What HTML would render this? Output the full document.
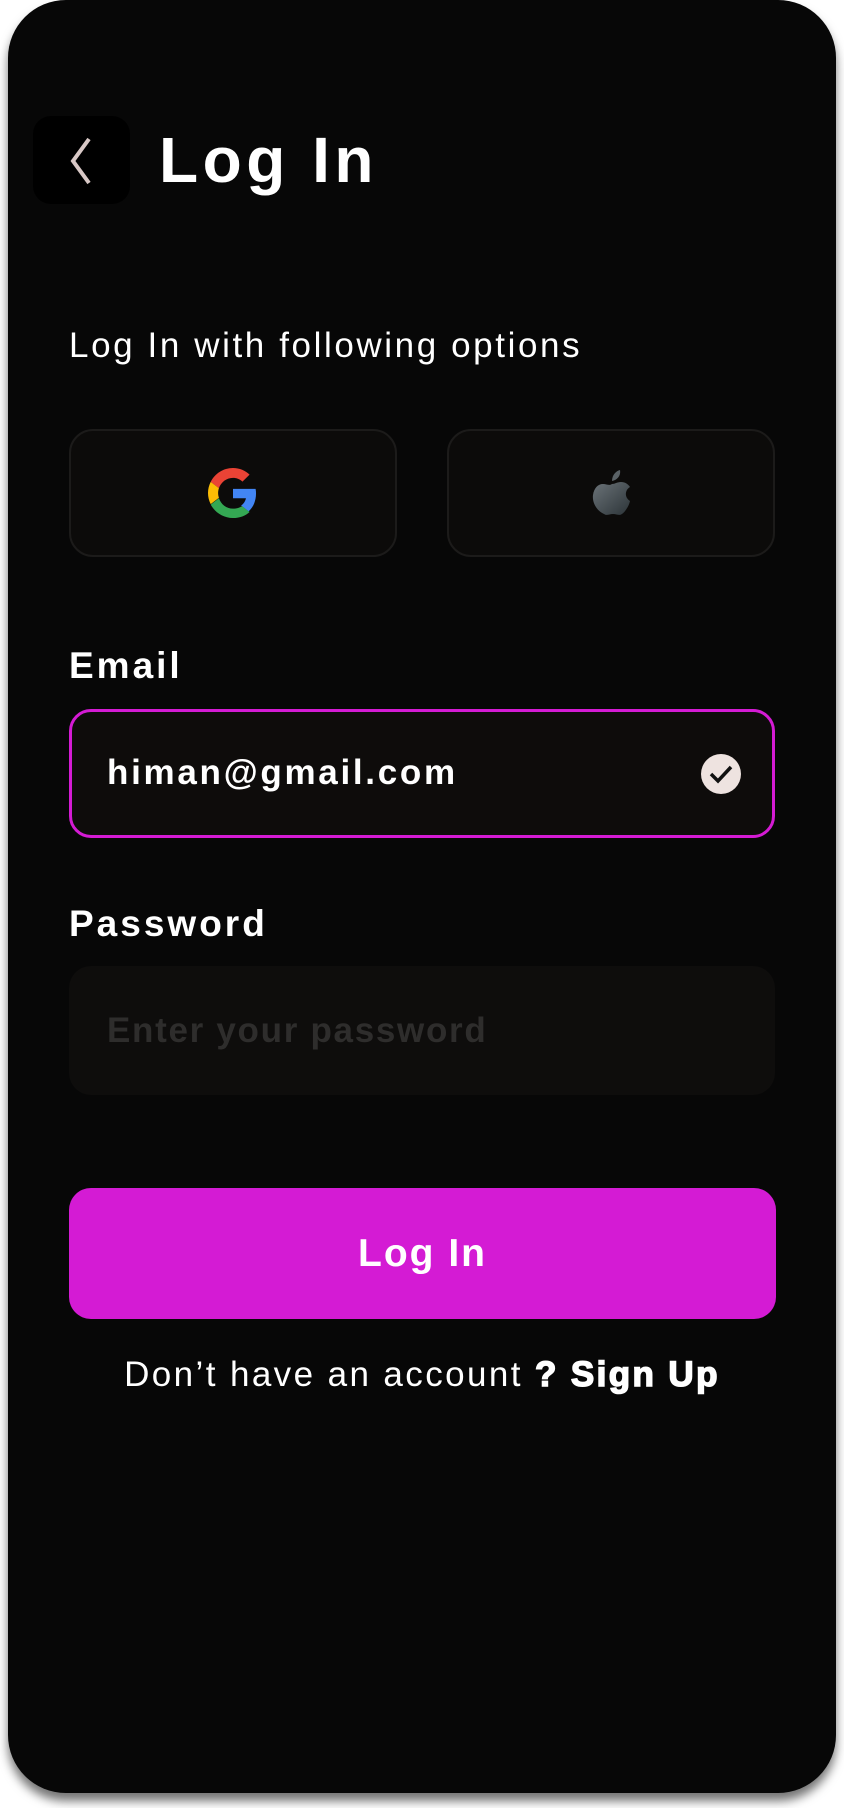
<!DOCTYPE html>
<html><head><meta charset="utf-8"><style>
*{margin:0;padding:0;box-sizing:border-box}
html,body{width:844px;height:1808px;background:#fff;overflow:hidden;font-family:"Liberation Sans",sans-serif}
.card{position:absolute;left:8px;top:0;width:828px;height:1793px;background:#070707;border-radius:58px;box-shadow:0 8px 10px rgba(0,0,0,.55)}
.abs{position:absolute}
.back{left:33px;top:116px;width:97px;height:88px;background:#000;border-radius:18px}
.title{left:159px;top:120px;font-size:64px;font-weight:bold;color:#fff;line-height:80px;letter-spacing:4.5px}
.sub{left:69px;top:325px;font-size:35px;color:#fff;line-height:42px;letter-spacing:2.6px}
.soc{top:429px;width:328px;height:128px;background:#0c0b0a;border:2px solid #1c1b1a;border-radius:24px}
.lbl{left:69px;font-size:37px;font-weight:bold;color:#fff;line-height:44px;letter-spacing:3px}
.inp{left:69px;width:706px;height:129px;border-radius:22px}
.btn{left:69px;top:1188px;width:707px;height:131px;background:#d41bd4;border-radius:22px;color:#fff;font-size:39px;font-weight:bold;text-align:center;line-height:131px;letter-spacing:2px}
</style></head><body>
<div class="card"></div>
<div class="abs back"><svg width="97" height="88" viewBox="0 0 97 88"><path d="M56 23 L40 45 L56 67" fill="none" stroke="#d8c8c6" stroke-width="4"/></svg></div>
<div class="abs title">Log In</div>
<div class="abs sub">Log In with following options</div>
<div class="abs soc" style="left:69px"><svg class="abs" style="left:137px;top:37px" width="50" height="50" viewBox="0 0 48 48"><path fill="#EA4335" d="M24 9.5c3.5 0 6.6 1.2 9.1 3.6l6.8-6.8C35.8 2.4 30.3 0 24 0 14.6 0 6.6 5.4 2.6 13.3l7.9 6.1C12.4 13.7 17.7 9.5 24 9.5z"/><path fill="#4285F4" d="M46.1 24.5c0-1.6-.1-3.1-.4-4.5H24v9h12.4c-.5 2.900-2.2 5.3-4.6 7l7.2 5.6c4.3-3.9 7.1-9.8 7.1-17.1z"/><path fill="#FBBC05" d="M10.5 28.6c-.5-1.4-.8-3-.8-4.6s.3-3.2.8-4.6l-7.9-6.1C.9 16.6 0 20.2 0 24s.9 7.4 2.6 10.7l7.9-6.1z"/><path fill="#34A853" d="M24 48c6.5 0 11.9-2.1 15.9-5.8l-7.2-5.6c-2.2 1.5-5 2.4-8.7 2.4-6.3 0-11.6-4.2-13.5-10l-7.9 6.1C6.6 42.6 14.6 48 24 48z"/></svg></div>
<div class="abs soc" style="left:447px"><svg class="abs" style="left:142px;top:36px" width="44" height="54" viewBox="0 0 44 54"><defs><linearGradient id="g" x1="0" y1="0" x2="1" y2="1"><stop offset="0" stop-color="#6b7378"/><stop offset="1" stop-color="#2c3438"/></linearGradient></defs><path fill="url(#g)" d="M21 17c3 0 5-2 9-2 4 0 7 2 9 5-5 3-6 10 0 14-1 5-5 11-8 13-3 2-5 0-9 0s-6 2-9 0C6 44 1 36 2 28c1-7 5-11 10-11 4 0 6 2 9 0z"/><path fill="#5a6266" d="M21 14c0-6 4-10 8-11 1 6-3 10-8 11z"/></svg></div>
<div class="abs lbl" style="top:644px">Email</div>
<div class="abs inp" style="top:709px;background:#0e0c0b;border:3px solid #d41bd4"></div>
<div class="abs" style="left:107px;top:752px;font-size:35px;font-weight:bold;color:#fff;line-height:42px;letter-spacing:2.7px">himan@gmail.com</div>
<svg class="abs" style="left:700px;top:753px" width="42" height="42" viewBox="0 0 42 42"><circle cx="21" cy="21" r="20" fill="#eee3e0"/><path d="M11 21 L18 28 L31 14" fill="none" stroke="#111" stroke-width="3.5"/></svg>
<div class="abs lbl" style="top:902px">Password</div>
<div class="abs inp" style="top:966px;background:#0e0d0c"></div>
<div class="abs" style="left:107px;top:1010px;font-size:35px;font-weight:bold;color:#2e2d2c;line-height:42px;letter-spacing:1.7px">Enter your password</div>
<div class="abs btn">Log In</div>
<div class="abs" style="left:0;width:844px;top:1354px;text-align:center;font-size:35px;color:#fff;line-height:42px;letter-spacing:2.4px">Don’t have an account <b style="-webkit-text-stroke:1.5px #fff">? Sign Up</b></div>
</body></html>
